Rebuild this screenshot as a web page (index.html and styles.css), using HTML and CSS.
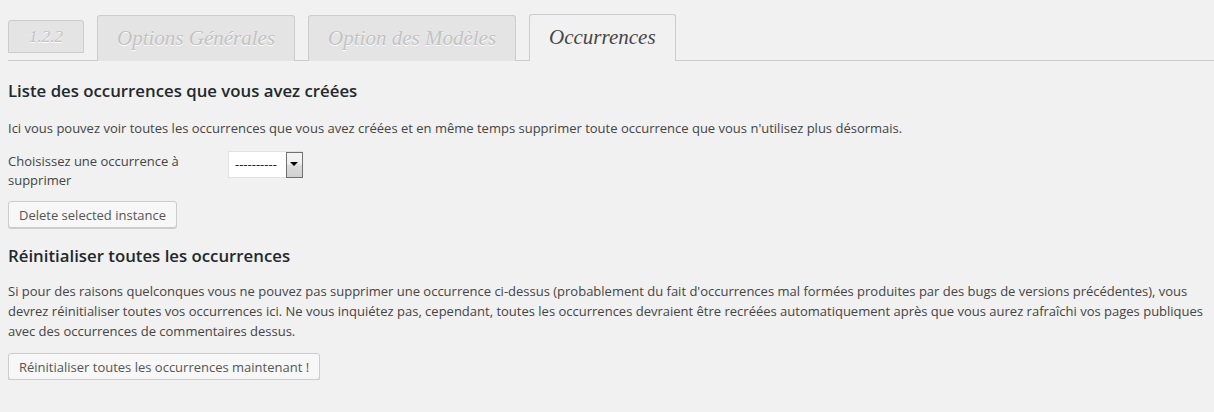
FILE: index.html
```html
<!DOCTYPE html>
<html lang="fr">
<head>
    <meta charset="UTF-8">
    <meta name="viewport" content="width=device-width, initial-scale=1.0">
    <title>Occurrences</title>
    <link rel="stylesheet" href="styles.css">
</head>
<body>
    <div class="wrap">
        <div class="tabs">
            <span class="tab tab-version">1.2.2</span>
            <a class="tab" href="#">Options Générales</a>
            <a class="tab" href="#">Option des Modèles</a>
            <a class="tab tab-active" href="#">Occurrences</a>
        </div>

        <h3 class="first">Liste des occurrences que vous avez créées</h3>
        <p class="intro">Ici vous pouvez voir toutes les occurrences que vous avez créées et en même temps supprimer toute occurrence que vous n'utilisez plus désormais.</p>

        <form class="delete-form">
            <div class="form-row">
                <label for="instance">Choisissez une occurrence à supprimer</label>
                <div class="select-box">
                    <span class="select-value">----------</span>
                    <span class="select-arrow"></span>
                </div>
            </div>
            <button type="button" class="button">Delete selected instance</button>
        </form>

        <h3 class="second">Réinitialiser toutes les occurrences</h3>
        <p class="reset-text">Si pour des raisons quelconques vous ne pouvez pas supprimer une occurrence ci-dessus (probablement du fait d'occurrences mal formées produites par des bugs de versions précédentes), vous devrez réinitialiser toutes vos occurrences ici. Ne vous inquiétez pas, cependant, toutes les occurrences devraient être recréées automatiquement après que vous aurez rafraîchi vos pages publiques avec des occurrences de commentaires dessus.</p>
        <button type="button" class="button">Réinitialiser toutes les occurrences maintenant !</button>
    </div>
</body>
</html>
```

FILE: styles.css
```css
body {
    margin: 0;
    background-color: #f1f1f1;
    font-family: "Open Sans", sans-serif;
    font-size: 13px;
    color: #444;
}
.wrap {
    padding: 14px 6px 0 8px;
}
.tabs {
    display: flex;
    align-items: flex-end;
    gap: 13px;
    border-bottom: 1px solid #ccc;
    margin-right: -6px;
}
.tab {
    display: block;
    height: 45px;
    line-height: 45px;
    padding: 0 19px;
    margin-bottom: -1px;
    border: 1px solid #ccc;
    border-bottom: none;
    border-radius: 3px 3px 0 0;
    background-color: #e4e4e4;
    font-family: "Liberation Serif", serif;
    font-style: italic;
    font-size: 21px;
    color: #c2c2c2;
    text-shadow: 0 1px 0 #fff;
    text-decoration: none;
}
.tab-version {
    height: 31px;
    line-height: 31px;
    margin-bottom: 7px;
    padding: 0 20px;
    border-bottom: 1px solid #ccc;
    font-size: 17px;
}
.tab-active {
    background-color: #f1f1f1;
    color: #464646;
    text-shadow: none;
    height: 46px;
}
h3 {
    font-size: 16.8px;
    font-weight: 600;
    color: #23282d;
    line-height: 23px;
    margin: 0;
}
h3.first {
    margin-top: 18px;
}
h3.second {
    margin-top: 16px;
}
p {
    margin: 0;
    line-height: 20px;
}
.intro {
    margin-top: 16px;
}
.reset-text {
    margin-top: 14px;
    margin-bottom: 12px;
}
.delete-form {
    margin-top: 14px;
}
.form-row {
    display: flex;
    align-items: flex-start;
}
.form-row label {
    width: 200px;
    padding-right: 20px;
    line-height: 19px;
}
.select-box {
    display: flex;
    height: 27px;
    margin-top: -1px;
    background-color: #fff;
    border: 1px solid #e2e2e2;
    box-sizing: border-box;
}
.select-value {
    width: 51px;
    line-height: 25px;
    padding-left: 6px;
    color: #222;
    font-size: 13px;
}
.select-arrow {
    position: relative;
    width: 17px;
    border: 1px solid #707070;
    box-sizing: border-box;
    margin: 0 -1px -1px 0;
    background: linear-gradient(#f4f4f4, #f0f0f0 45%, #dcdcdc 50%, #d0d0d0);
}
.select-arrow::after {
    content: "";
    position: absolute;
    left: 3px;
    top: 9px;
    border-left: 4px solid transparent;
    border-right: 4px solid transparent;
    border-top: 4px solid #000;
}
.button {
    display: block;
    height: 27px;
    padding: 0 10px;
    margin-top: 11px;
    font-family: "Open Sans", sans-serif;
    font-size: 13px;
    color: #555;
    background-color: #f7f7f7;
    border: 1px solid #ccc;
    border-radius: 3px;
    box-shadow: 0 1px 0 #ccc;
    cursor: pointer;
}
```
